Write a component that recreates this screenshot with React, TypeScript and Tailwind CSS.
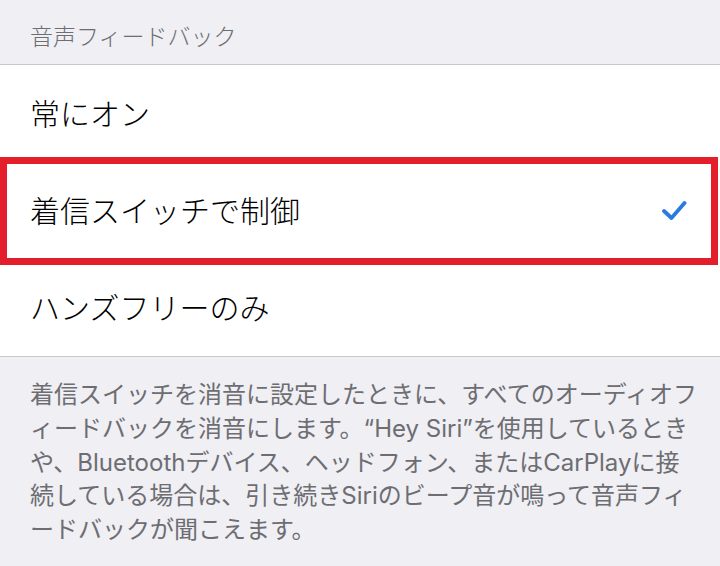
import React from 'react';

const FONT = 'font-["Inter","Noto_Sans_CJK_JP",sans-serif]';

function Check() {
  return (
    <svg width="26" height="22" viewBox="0 0 26 22" fill="none">
      <path d="M3 11 L10.5 18 L23.5 3" stroke="#2a7be0" strokeWidth="3.8" strokeLinecap="round" strokeLinejoin="round" />
    </svg>
  );
}

function Row({ label, checked }: { label: string; checked?: boolean }) {
  return (
    <div className="h-[97px] flex items-center justify-between pl-[30px] pr-[33px] bg-white">
      <span className="text-[30px] leading-none font-light text-black">{label}</span>
      {checked && <Check />}
    </div>
  );
}

export default function App() {
  const footer = [
    '着信スイッチを消音に設定したときに、すべてのオーディオフ',
    'ィードバックを消音にします。“Hey Siri”を使用しているとき',
    'や、Bluetoothデバイス、ヘッドフォン、またはCarPlayに接',
    '続している場合は、引き続きSiriのビープ音が鳴って音声フィ',
    'ードバックが聞こえます。',
  ];

  return (
    <div className={`w-[720px] h-[566px] overflow-hidden bg-[#efeff4] ${FONT}`}>
      {/* section header */}
      <div className="h-[65px] flex items-end pl-[30px] pb-[12px] border-b border-[#c8c7cc]">
        <span className="text-[23px] leading-[30px] font-light text-[#6d6d72]">音声フィードバック</span>
      </div>

      <div className="bg-white">
        <Row label="常にオン" />
        <div className="relative">
          <Row label="着信スイッチで制御" checked />
          <div className="absolute left-0 right-[2px] top-[-5px] bottom-[-6px] border-[7px] border-[#e41e2b]" />
        </div>
        <Row label="ハンズフリーのみ" />
      </div>

      {/* footer note */}
      <div className="border-t border-[#c8c7cc] pt-[21px] pl-[30px] text-[24px] leading-[33.75px] text-[#6d6d72]">
        {footer.map((line) => (
          <div key={line} className="whitespace-nowrap">
            {line}
          </div>
        ))}
      </div>
    </div>
  );
}
